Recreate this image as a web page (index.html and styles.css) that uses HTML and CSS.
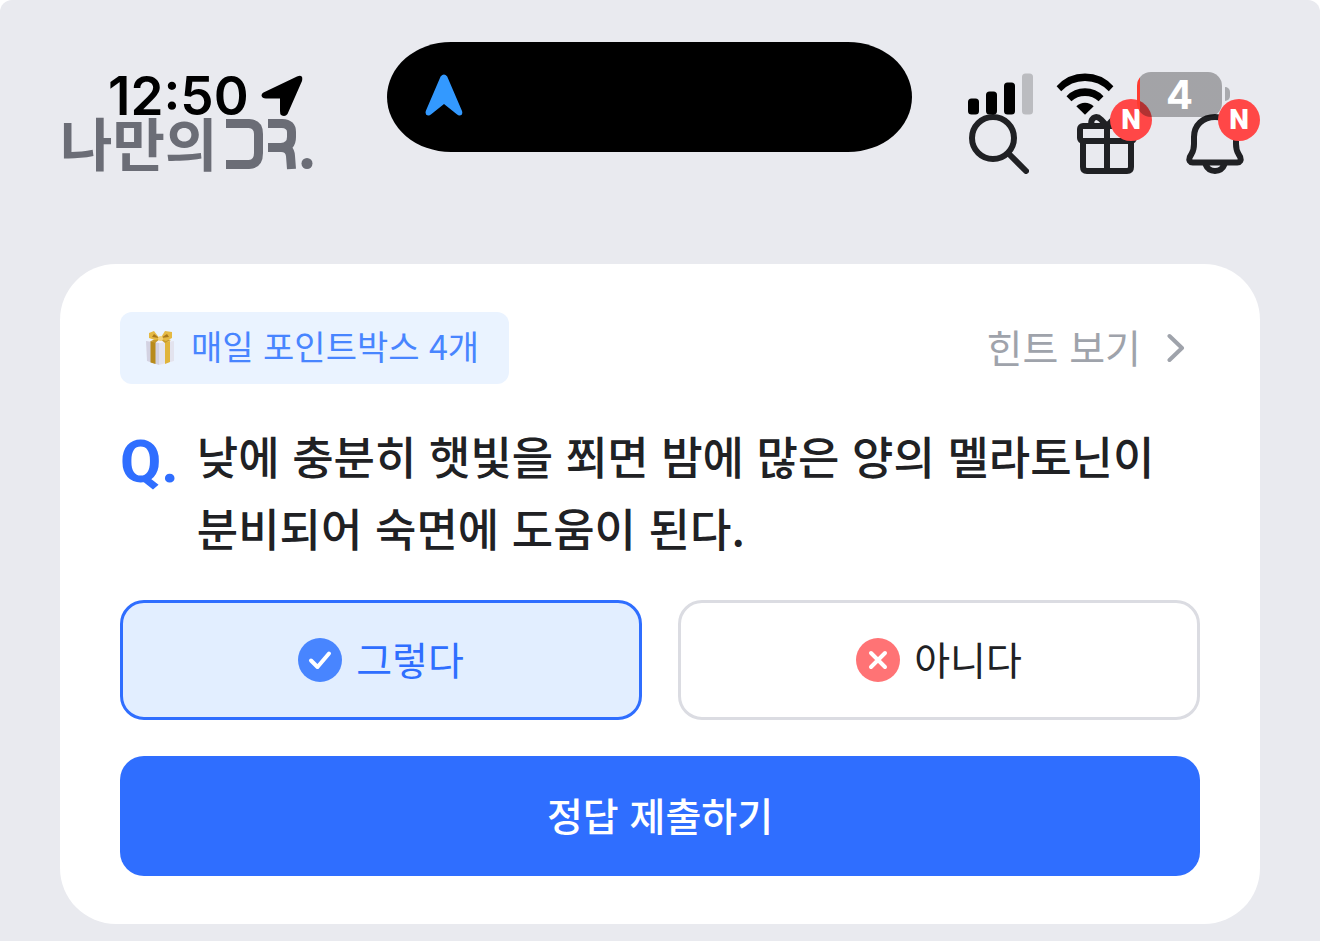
FILE: index.html
```html
<!DOCTYPE html>
<html lang="ko">
<head>
<meta charset="utf-8">
<meta name="viewport" content="width=device-width, initial-scale=1">
<title>나만의DR.</title>
<link rel="stylesheet" href="styles.css">
</head>
<body>
<div class="screen">
  <div class="status">
    <div class="status-left">
      <time class="clock">12:50</time>
      <svg width="42" height="42" viewBox="0 0 42 42" aria-hidden="true"><path d="M2.500 17.500 L36 1.500 Q42.500 -1 41 6 L26.500 39 Q24 42.500 20 40 Q19 39 19 36 V23.500 H5 Q1 23.500 .5 20.500 Q.5 18.500 2.500 17.500Z"/></svg>
    </div>
    <div class="island">
      <svg width="38" height="42" viewBox="0 0 38 42" aria-hidden="true"><path fill="#3399ff" d="M15.600 2.600 Q19-1.800 22.200 2.600 L37 37 Q38.200 41 35 41.500 Q33.500 41.700 31.500 40 L19 30 L6.500 40 Q4.500 41.700 3 41.500 Q-.2 41 .8 37Z"/></svg>
    </div>
    <div class="status-right">
      <svg width="65" height="42" viewBox="0 0 65 42" aria-hidden="true"><rect y="25.500" width="11" height="16" rx="3.500"/><rect x="18" y="18.500" width="11" height="23" rx="3.500"/><rect x="36" y="9.500" width="11" height="32" rx="3.500"/><rect x="54" y=".5" width="11" height="41" rx="3.500" fill="#bbbcc0"/></svg>
      <svg width="58" height="42" viewBox="0 0 58 42" aria-hidden="true"><path d="M.6 13.200 Q12 .5 29 .5 T57.400 13.200 L52.800 18.300 Q43 8 29 8 T5.200 18.300Z"/><path d="M10.500 23.200 Q18 15.300 29 15.300 T47.500 23.200 L42.600 28.300 Q37 23 29 23 T15.400 28.300Z"/><path d="M20.300 33.300 Q24 29.800 29 29.800 T37.700 33.300 L29 41.800Z"/></svg>
      <div class="battery"><span class="level">4</span><span class="cap"></span></div>
    </div>
  </div>

  <header class="header">
    <a class="logo" href="#" aria-label="나만의DR.">
      <span>나만의</span>
      <svg width="87" height="56" viewBox="226 115 87 56" aria-hidden="true"><g fill="none" stroke="#6b6d76" stroke-width="9"><path d="M226 123.500 H249 Q258.500 124 258.500 134 V153 Q258.500 164 249 164.500 H226"/><path d="M268 123.500 H282 Q291.500 124 291.500 132 V137 Q291.500 147 281 147.500 H268"/><path d="M276 147.500 H281 Q290 147.500 290.500 156 L291.500 169"/></g><circle cx="307" cy="163.500" r="5.500" fill="#6b6d76"/></svg>
    </a>
    <nav class="actions">
      <button class="icon-button" aria-label="검색">
        <svg width="60" height="62" viewBox="0 0 60 62" aria-hidden="true"><circle cx="24" cy="26" r="21"/><path d="M39.500 41.500 L57 59"/></svg>
      </button>
      <button class="icon-button" aria-label="선물">
        <svg width="60" height="62" viewBox="0 0 60 62" aria-hidden="true"><rect x="3" y="14" width="54" height="15" rx="3"/><path d="M6 29 V55 Q6 59 10 59 H50 Q54 59 54 55 V29 M30 14 V59 M30 14 L24 7.500 Q20 3.500 16.500 6 Q13 9 15 14 M30 14 L36 7.500 Q40 3.500 43.500 6 Q47 9 45 14"/></svg>
        <span class="new">N</span>
      </button>
      <button class="icon-button" aria-label="알림">
        <svg width="60" height="62" viewBox="0 0 60 62" aria-hidden="true"><path d="M30 5 C18 5 9 13 9 25 V32 Q9 38 6.500 42 L4.800 45 Q3 50 8 50.500 H52 Q57 50 55.200 45 L53.500 42 Q51 38 51 32 V25 C51 13 42 5 30 5Z M20 51.500 Q23 59 30 59 T40 51.500"/></svg>
        <span class="new">N</span>
      </button>
    </nav>
  </header>

  <main class="card">
    <div class="card-top">
      <span class="reward">
        <svg width="28" height="36" viewBox="0 0 28 36" aria-hidden="true"><path fill="#f3f3fb" d="M0 11 L14 9 L28 11 V31 L15 35 L1 31Z"/><path fill="#d3d2e2" d="M0 11 L13 13 V35 L1 31Z"/><path fill="#e3e3ee" d="M13 13 L28 11 V31 L13 35Z"/><path fill="#b88b1c" d="M4.500 11 L9.500 12 V34 L4.500 32.500Z"/><path fill="#e0b43a" d="M19 12 L24 11 V32 L19 34Z"/><path fill="#c89b2b" d="M5 11 L13 7 L25 10 L19 13 L14 9 L9 13Z"/><path fill="#e5b943" d="M14 9 L8 1 L3 3 L3 8 L9 10Z M14 9 L19 1 L26 2 L26 8 L20 11Z"/><path fill="#a9781b" d="M13 8 L8 4 L6 7Z M15 8 L21 4 L23 7Z"/><circle cx="14.500" cy="8.500" r="2.500" fill="#f3d27b"/></svg>
        <span class="label">매일 포인트박스 4개</span>
      </span>
      <a class="hint" href="#"><span class="label">힌트 보기</span>
        <svg width="18" height="30" viewBox="0 0 18 30" aria-hidden="true"><path d="M2.500 3 L15 15 L2.500 27" fill="none" stroke="#9fa3ab" stroke-width="4" stroke-linecap="round" stroke-linejoin="round"/></svg>
      </a>
    </div>
    <div class="question">
      <span class="q">Q.</span>
      <p class="question-text">낮에 충분히 햇빛을 쬐면 밤에 많은 양의 멜라토닌이 분비되어 숙면에 도움이 된다.</p>
    </div>
    <div class="answers">
      <button class="answer selected" aria-pressed="true">
        <svg width="44" height="44" viewBox="0 0 44 44" aria-hidden="true"><circle cx="22" cy="22" r="22" fill="#4885ff"/><path d="M13 22.500 L19.500 29 L31 15.500" fill="none" stroke="#fff" stroke-width="4" stroke-linecap="round" stroke-linejoin="round"/></svg>
        <span class="label">그렇다</span>
      </button>
      <button class="answer" aria-pressed="false">
        <svg width="44" height="44" viewBox="0 0 44 44" aria-hidden="true"><circle cx="22" cy="22" r="22" fill="#ff7375"/><path d="M15 15 L29 29 M29 15 L15 29" fill="none" stroke="#fff" stroke-width="4" stroke-linecap="round"/></svg>
        <span class="label">아니다</span>
      </button>
    </div>
    <button class="submit"><span class="label">정답 제출하기</span></button>
  </main>
</div>
</body>
</html>
```
FILE: styles.css
```css
* {
  box-sizing: border-box;
}

body {
  margin: 0;
  background: #fff;
  font-family: "Noto Sans CJK KR", sans-serif;
  color: #202124;
}

svg {
  display: block;
  flex: none;
}

a {
  color: inherit;
  text-decoration: none;
}

button {
  margin: 0;
  padding: 0;
  border: 0;
  background: none;
  color: inherit;
  font: inherit;
  cursor: pointer;
}

.screen {
  position: relative;
  min-height: 100vh;
  padding: 112px 60px 16px;
  border-radius: 12px 12px 0 0;
  background: #e9eaef;
}

/* System bar floats over the app header */
.status {
  position: absolute;
  z-index: 2;
  top: 42px;
  left: 0;
  right: 0;
  display: grid;
  grid-template-columns: 1fr 525px 1fr;
  align-items: center;
  padding-right: 21px;
  color: #000;
  pointer-events: none;
}

.status-left {
  display: flex;
  align-items: center;
  gap: 12px;
  padding: 0 0 2px 108px;
}

.clock {
  font: 600 53px/64px Inter, sans-serif;
}

.island {
  display: flex;
  align-items: center;
  height: 110px;
  padding: 0 38px 4px;
  border-radius: 64px / 55px;
  background: #000;
}

.status-right {
  display: flex;
  align-items: center;
  justify-content: flex-end;
  gap: 23px;
  padding: 0 69px 6px 0;
}

.battery {
  display: flex;
  align-items: center;
  gap: 3px;
}

.level {
  width: 85px;
  height: 45px;
  border-radius: 14px;
  background: linear-gradient(90deg, #ff3b30 3px, rgba(0, 0, 0, 0.3) 3px);
  color: #fff;
  font: 700 40px/46px Inter, sans-serif;
  text-align: center;
}

.cap {
  width: 5px;
  height: 14px;
  border-radius: 0 5px 5px 0;
  background: #a9aaae;
}

.header {
  display: flex;
  align-items: center;
  justify-content: space-between;
  height: 62px;
  padding-right: 15px;
}

.logo {
  display: flex;
  align-items: center;
  gap: 9px;
  color: #6b6d76;
  font-size: 57px;
  font-weight: 700;
  line-height: 58px;
}

.logo span {
  padding-bottom: 4px;
}

.actions {
  display: flex;
  gap: 48px;
}

.icon-button {
  position: relative;
}

.icon-button svg {
  fill: none;
  stroke: #202124;
  stroke-width: 6;
  stroke-linecap: round;
  stroke-linejoin: round;
}

.new {
  position: absolute;
  top: -13px;
  right: -15px;
  width: 42px;
  height: 42px;
  border-radius: 50%;
  background: #ff4747;
  color: #fff;
  font: 900 28px/42px Roboto, sans-serif;
  text-align: center;
}

.card {
  display: flex;
  flex-direction: column;
  gap: 36px;
  margin-top: 90px;
  padding: 48px 60px;
  border-radius: 56px;
  background: #fff;
}

.card-top {
  display: flex;
  align-items: center;
  justify-content: space-between;
}

.label {
  padding-bottom: 4px;
}

.reward {
  display: flex;
  align-items: center;
  gap: 17px;
  height: 72px;
  padding: 0 30px 0 26px;
  border-radius: 12px;
  background: #eaf3ff;
  color: #4885ff;
  font-size: 34px;
  line-height: 50px;
}

.hint {
  display: flex;
  align-items: center;
  gap: 26px;
  padding-right: 15px;
  color: #9fa3ab;
  font-size: 39px;
  line-height: 56px;
}

.question {
  display: flex;
  gap: 18px;
}

.q {
  color: #2f6eff;
  font: 700 60px/84px Roboto, sans-serif;
}

.question-text {
  flex: 1;
  margin: 0;
  font-size: 45px;
  font-weight: 500;
  line-height: 72px;
  word-break: keep-all;
}

.answers {
  display: grid;
  grid-template-columns: 1fr 1fr;
  gap: 36px;
}

.answer {
  display: flex;
  align-items: center;
  justify-content: center;
  gap: 14px;
  height: 120px;
  border: 3px solid #dbdce2;
  border-radius: 24px;
  font-size: 39px;
  line-height: 56px;
}

.answer.selected {
  border-color: #2f6eff;
  background: #e2eeff;
  color: #2f6eff;
}

.submit {
  display: flex;
  align-items: center;
  justify-content: center;
  height: 120px;
  border-radius: 24px;
  background: #2f6eff;
  color: #fff;
  font-size: 39px;
  font-weight: 500;
  line-height: 56px;
}
```
